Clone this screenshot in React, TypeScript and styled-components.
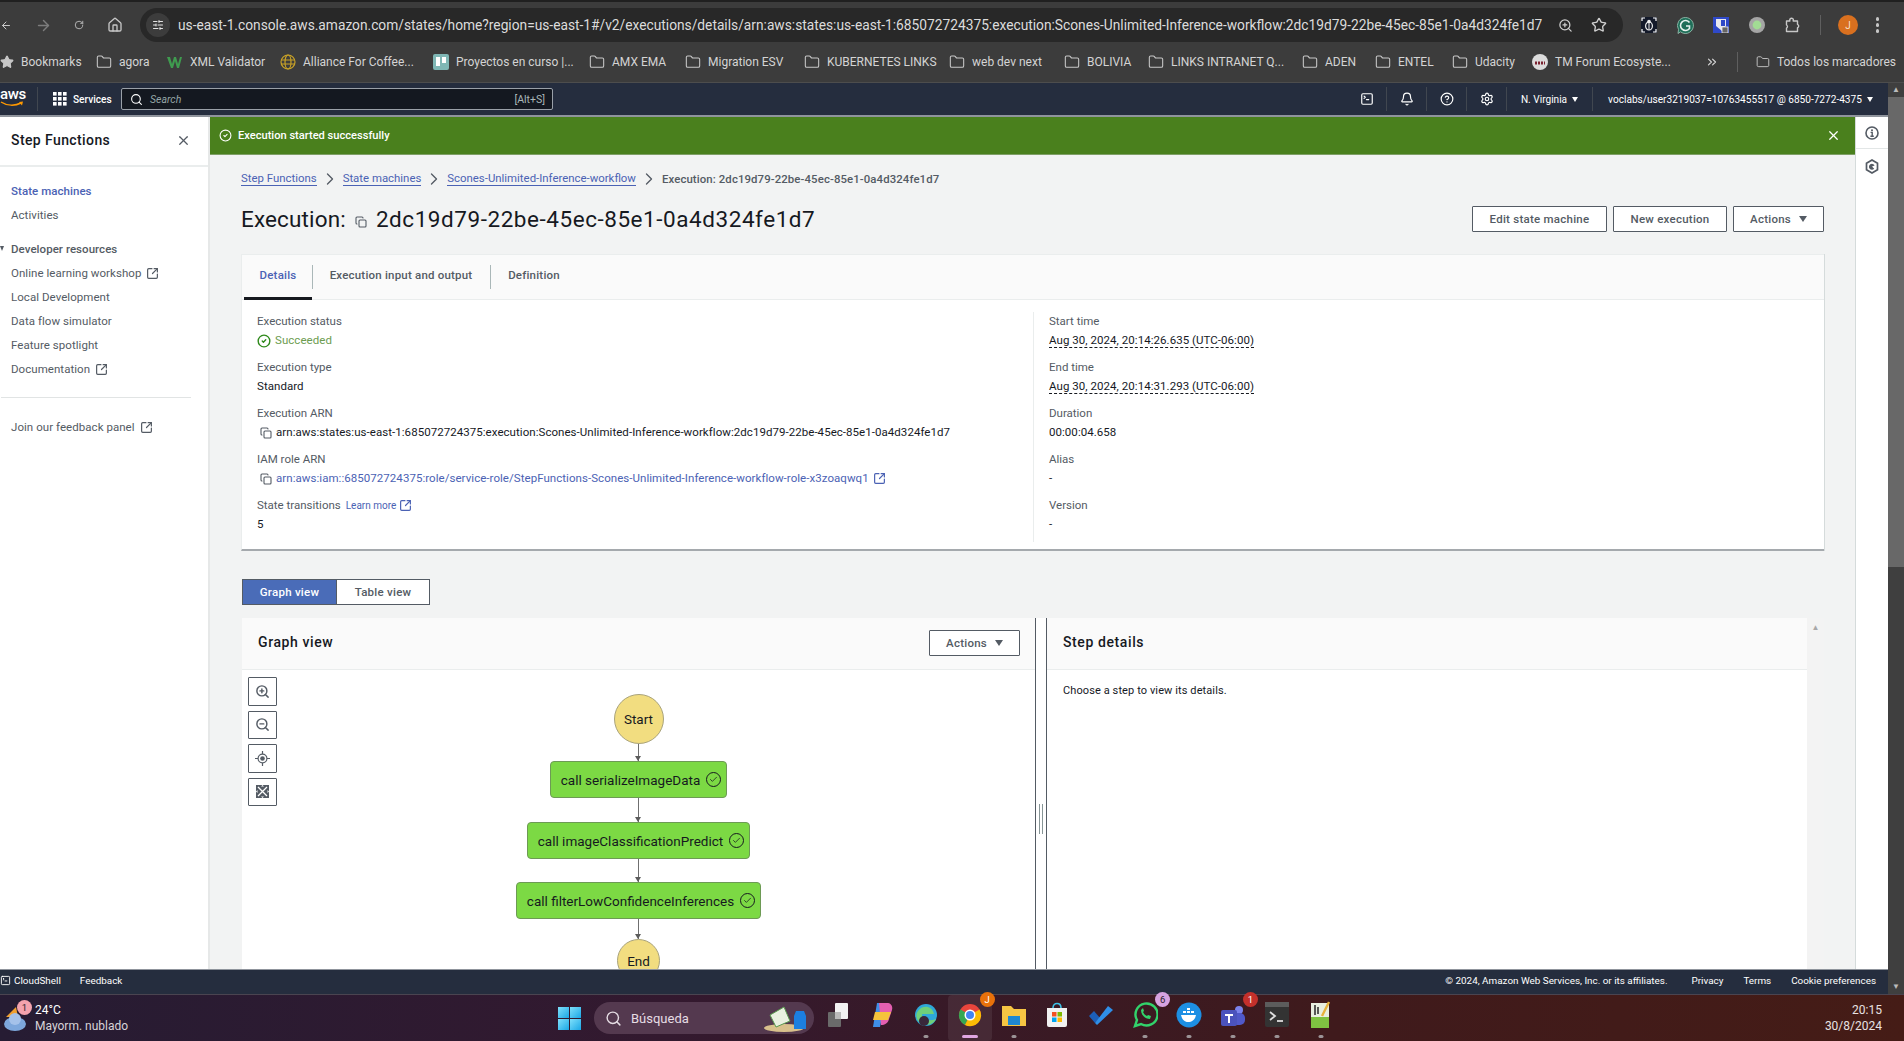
import React from "react";
import styled, { createGlobalStyle } from "styled-components";
import {
  ArrowLeft, ArrowRight, RotateCw, Home, SlidersHorizontal, ZoomIn, ZoomOut, Star,
  Folder, Search, X, CircleCheck, Copy, SquareArrowOutUpRight, ChevronRight, ChevronsRight, Bell, CircleHelp, Settings,
  SquareTerminal, Check,
} from "lucide-react";

const Global = createGlobalStyle`
  html, body { margin: 0; height: 100%; overflow: hidden; background: #3c3c3c; }
  body { font-family: Roboto, "Liberation Sans", sans-serif; font-size: 12px; color: #16191f; }
  * { box-sizing: border-box; }
`;

const Screen = styled.div`display: flex; flex-direction: column; width: 1904px; height: 1041px; overflow: hidden;`;

const TabEdge = styled.div`height: 2px; background: #202020; flex: none;`;
const Toolbar = styled.div`height: 42px; flex: none; background: #3c3c3c; display: flex; align-items: center; padding-top: 4px; color: #c7c7c7;`;
const NavBtn = styled.span<{ $w: number; $dim?: boolean }>`
  width: ${(p) => p.$w}px; display: flex; justify-content: center; flex: none;
  color: ${(p) => (p.$dim ? "#7d7d7d" : "#c7c7c7")};
`;
const Address = styled.div`
  width: 1483px; height: 34px; margin-left: -6px; background: #282828; border-radius: 17px; flex: none;
  display: flex; align-items: center; padding: 0 16px 0 6px; color: #e3e3e3;
`;
const SiteChip = styled.span`width: 24px; height: 24px; border-radius: 50%; background: #3c3c3c; display: flex; align-items: center; justify-content: center; flex: none; margin-right: 8px;`;
const Url = styled.span`font-size: 13.76px; flex: 1; white-space: nowrap; color: #dcdcdc; overflow: hidden;`;
const AddrIcons = styled.span`display: flex; gap: 18px; align-items: center; color: #d0d0d0;`;
const ExtRow = styled.div`display: flex; align-items: center; margin-left: 8px; flex: 1;`;
const ExtSlot = styled.span`width: 36px; display: flex; justify-content: center; flex: none;`;
const ToolSep = styled.span`width: 1px; height: 20px; background: #5f5f5f; margin: 0 17px 0 9px; flex: none;`;
const Avatar = styled.span`width: 20px; height: 20px; border-radius: 50%; background: #d9701f; color: #f6dfc6; font-size: 10px; display: flex; align-items: center; justify-content: center; flex: none; margin-right: 18px;`;
const MenuDots = styled.span`display: flex; flex-direction: column; gap: 2.5px; flex: none;`;
const MenuDot = styled.i`width: 3.4px; height: 3.4px; border-radius: 50%; background: #c7c7c7; display: block;`;

const Bookmarks = styled.div`height: 39px; flex: none; background: #3c3c3c; border-bottom: 1px solid #4d4d4d; display: flex; align-items: center; color: #d4d4d4; font-size: 12px; padding-bottom: 2px;`;
const Mark = styled.span<{ $w: number }>`width: ${(p) => p.$w}px; flex: none; display: flex; align-items: center; gap: 7px; white-space: nowrap;`;
const MoreMarks = styled.span`width: 34px; flex: none; display: flex; padding-left: 2px;`;
const MarkSep = styled.span`width: 1px; height: 20px; background: #5f5f5f; margin-right: 18px; flex: none;`;
const Favicon = styled.span<{ $bg: string }>`width: 16px; height: 16px; border-radius: 2px; background: ${(p) => p.$bg}; color: #fff; font-size: 9px; font-weight: 700; display: flex; align-items: center; justify-content: center; flex: none;`;

const PageRow = styled.div`flex: none; height: 911px; display: flex;`;
const Page = styled.div`width: 1888px; flex: none; display: flex; flex-direction: column;`;
const Scrollbar = styled.div`width: 16px; flex: none; background: #3f3f3f; display: flex; flex-direction: column; align-items: center; color: #bbb; font-size: 8px; line-height: 14px;`;
const Thumb = styled.div`width: 16px; height: 470px; background: #686868; margin: 0 0 auto;`;

const AwsNav = styled.div`height: 34px; flex: none; background: #252d3e; border-bottom: 2px solid #8f949c; display: flex; align-items: center; color: #fff; font-size: 10.1px; position: relative;`;
const AwsLogo = styled.span`width: 38px; height: 24px; border-right: 1px solid #414750; position: relative; flex: none; display: block; font-size: 15px; font-weight: 500; line-height: 15px; letter-spacing: -0.3px;`;
const Swoosh = styled.svg`position: absolute; left: 0; top: 14px;`;
const ServicesBtn = styled.span`display: flex; align-items: center; gap: 6px; margin-left: 15px; width: 68px; flex: none; font-weight: 500;`;
const SearchBox = styled.div`width: 432px; height: 22px; background: #141820; border: 1px solid #9aa0a8; border-radius: 2px; display: flex; align-items: center; gap: 7px; padding: 0 7px 0 8px; flex: none; color: #aab7b8; font-size: 10.5px;`;
const SearchHint = styled.i`flex: 1; color: #95a5a6;`;
const NavRight = styled.div`margin-left: auto; display: flex; align-items: center; height: 100%;`;
const NavIcon = styled.span`width: 40px; height: 24px; border-right: 1px solid #414750; display: flex; align-items: center; justify-content: center; flex: none;`;
const NavMenu = styled.span<{ $w: number; $last?: boolean }>`
  width: ${(p) => p.$w}px; height: 24px; flex: none; display: flex; align-items: center; justify-content: center; gap: 5px; white-space: nowrap;
  border-right: ${(p) => (p.$last ? "none" : "1px solid #414750")};
`;
const Caret = styled.span`display: inline-block; width: 0; height: 0; border-left: 3.5px solid transparent; border-right: 3.5px solid transparent; border-top: 5px solid currentColor; flex: none;`;
const BtnCaret = styled.span`display: inline-block; width: 0; height: 0; border-left: 4.5px solid transparent; border-right: 4.5px solid transparent; border-top: 6px solid currentColor; flex: none;`;

const Body = styled.div`flex: 1; min-height: 0; display: flex; background: #fff; overflow: hidden;`;
const Sidebar = styled.aside`width: 210px; flex: none; background: #fff; border-right: 2px solid #e6e8e8; color: #545b64; font-size: 11.5px;`;
const SideHead = styled.div`height: 50px; border-bottom: 2px solid #eaeded; display: flex; align-items: center; justify-content: space-between; padding: 0 17px 2px 11px; color: #16191f;`;
const SideTitle = styled.span`font-size: 14px; font-weight: 500; letter-spacing: 0.4px;`;
const SideItem = styled.div<{ $active?: boolean }>`
  height: 24px; display: flex; align-items: center; gap: 5px; padding-left: 11px; letter-spacing: 0.05px;
  color: ${(p) => (p.$active ? "#4b62b4" : "#545b64")}; font-weight: ${(p) => (p.$active ? 500 : 400)};
`;
const SideList = styled.div`padding-top: 12px;`;
const SideSection = styled.div`height: 24px; margin-top: 10px; display: flex; align-items: center; padding-left: 11px; font-weight: 500; position: relative; letter-spacing: 0.05px;`;
const SectionCaret = styled.span`position: absolute; left: 0; top: 9px; border-left: 2.5px solid transparent; border-right: 2.5px solid transparent; border-top: 5px solid #545b64;`;
const SideRule = styled.div`height: 1px; background: #e1e4e4; margin: 16px 17px 17px 1px;`;

const Main = styled.main`flex: 1; min-width: 0; background: #f2f3f3; overflow: hidden;`;
const Banner = styled.div`height: 38px; background: #4a801d; border-bottom: 1px solid #7f9f66; color: #fff; display: flex; align-items: center; gap: 6px; padding: 0 14px 0 9px; font-size: 11.1px; font-weight: 500;`;
const BannerText = styled.span`flex: 1;`;
const Content = styled.div`padding: 15px 31px 0;`;
const Crumbs = styled.nav`height: 18px; display: flex; align-items: center; gap: 3px; color: #545b64; font-size: 11.4px;`;
const CrumbLink = styled.a`color: #4b62b4; border-bottom: 1px solid #4b62b4; line-height: 13px;`;
const CrumbCurrent = styled.span`font-weight: 500; color: #545b64; letter-spacing: 0.1px;`;
const TitleRow = styled.div`display: flex; align-items: center; height: 28px; margin-top: 17px;`;
const Title = styled.h1`font-size: 22.5px; font-weight: 400; margin: 0; color: #16191f; display: flex; align-items: center; flex: 1; white-space: pre; letter-spacing: 0.15px;`;
const TitleId = styled.span`letter-spacing: 0.55px;`;
const TitleCopy = styled.span`display: flex; margin: 6px 9px 0 9px; color: #545b64;`;
const Button = styled.button<{ $w: number; $ml?: number }>`
  width: ${(p) => p.$w}px; height: 26px; margin-left: ${(p) => p.$ml ?? 0}px; flex: none; background: #fff; border: 1px solid #545b64; border-radius: 1px;
  color: #545b64; font: 500 11.5px Roboto, sans-serif; letter-spacing: 0.25px; display: flex; align-items: center; justify-content: center; gap: 8px; padding: 0;
`;
const Card = styled.section`margin-top: 21px; height: 297px; background: #fff; border-top: 1px solid #eaeded; border-left: 1px solid #eaeded; border-bottom: 2px solid #a5a9ad; box-shadow: 1px 0 0 #d5dbdb;`;
const TabRow = styled.div`height: 45px; background: #fafafa; border-bottom: 1px solid #eaeded; display: flex; padding-left: 2px;`;
const Tab = styled.div<{ $w: number; $active?: boolean; $sep?: boolean }>`
  width: ${(p) => p.$w}px; height: 45px; flex: none; display: flex; align-items: center; justify-content: center; position: relative;
  font-weight: 500; font-size: 11.5px; letter-spacing: 0.2px; padding-bottom: 3px; color: ${(p) => (p.$active ? "#4b62b4" : "#545b64")};
  border-bottom: 3px solid ${(p) => (p.$active ? "#16191f" : "transparent")};
  &::after { content: ""; position: absolute; right: -1px; top: 10px; height: 24px; width: 1px; background: ${(p) => (p.$sep ? "#aab7b8" : "transparent")}; }
`;
const Columns = styled.div`display: grid; grid-template-columns: 791px 1fr; padding-top: 12px;`;
const ColLeft = styled.div`padding-left: 15px;`;
const ColRight = styled.div`border-left: 1px solid #eaeded; padding-left: 15px;`;
const Field = styled.div`height: 46px;`;
const Label = styled.div`height: 19px; line-height: 19px; color: #545b64; font-size: 11.5px; display: flex; align-items: center; gap: 5px;`;
const Value = styled.div`height: 19px; line-height: 19px; font-size: 11.5px; display: flex; align-items: center; gap: 4px; color: #16191f; white-space: nowrap; letter-spacing: 0.05px;`;
const Success = styled.span`color: #6c9c50; display: flex; align-items: center; gap: 4px;`;
const SuccessIcon = styled.span`color: #2f8a1c; display: flex;`;
const Link = styled.a`color: #4b62b4; display: inline-flex; align-items: center; gap: 4px;`;
const Small = styled.a`color: #4b62b4; font-size: 10px; display: inline-flex; align-items: center; gap: 3px;`;
const CopyWrap = styled.span`display: flex; color: #545b64; margin-left: 3px;`;
const Dashed = styled.span`border-bottom: 1px dashed #16191f; line-height: 14px;`;

const ViewSwitch = styled.div`display: flex; margin: 28px 0 0 1px; height: 26px;`;
const ViewBtn = styled.div<{ $on?: boolean }>`
  width: ${(p) => (p.$on ? 95 : 93)}px; display: flex; align-items: center; justify-content: center; font-weight: 500; font-size: 11.5px; letter-spacing: 0.25px;
  border: 1px solid #545b64; border-left-width: ${(p) => (p.$on ? 1 : 0)}px;
  background: ${(p) => (p.$on ? "#4a6cb8" : "#fff")}; color: ${(p) => (p.$on ? "#fff" : "#545b64")};
`;
const GraphCard = styled.section`margin: 13px 0 0 1px; display: flex; height: 500px; background: #fff;`;
const GraphPane = styled.div`width: 794px; flex: none; position: relative; border-right: 1px solid #545b64;`;
const PaneHead = styled.div`height: 52px; background: #fafafa; border-bottom: 1px solid #eaeded; display: flex; align-items: center; justify-content: space-between; padding: 0 15px 2px 16px;`;
const PaneTitle = styled.h2`margin: 0 0 2px; font-size: 14px; font-weight: 500; letter-spacing: 0.6px; color: #16191f;`;
const Splitter = styled.div`width: 11px; flex: none; background: #fff; border-right: 1px solid #545b64; display: flex; align-items: flex-start; justify-content: center; padding-top: 186px; gap: 2px;`;
const Grip = styled.span`width: 1px; height: 30px; background: #879596;`;
const StepPane = styled.div`flex: 1; min-width: 0; display: flex;`;
const StepInner = styled.div`flex: 1; min-width: 0;`;
const StepText = styled.div`padding: 13px 0 0 16px; font-size: 11px; line-height: 15px; color: #16191f; letter-spacing: 0.1px;`;
const StepTrack = styled.div`width: 17px; flex: none; background: #f3f3f3; color: #a8a8a8; font-size: 8px; text-align: center; padding-top: 5px;`;
const Tools = styled.div`position: absolute; left: 6px; top: 59px; display: flex; flex-direction: column; gap: 5px;`;
const ToolBtn = styled.span`width: 29px; height: 28.5px; background: #fff; border: 1px solid #545b64; border-radius: 1px; color: #545b64; display: flex; align-items: center; justify-content: center;`;
const Canvas = styled.div`padding-top: 24px; display: flex; flex-direction: column; align-items: center;`;
const Circle = styled.div<{ $d: number }>`width: ${(p) => p.$d}px; height: ${(p) => p.$d}px; flex: none; border-radius: 50%; background: #f2dd80; border: 1px solid #a9a37c; display: flex; align-items: center; justify-content: center; font-size: 13.5px; color: #16191f;`;
const StepNode = styled.div`height: 37px; flex: none; background: #7cd944; border: 1px solid #6d9a55; border-radius: 4px; display: flex; align-items: center; gap: 6px; padding: 0 5px 0 10px; font-size: 13.5px; white-space: nowrap; color: #16191f;`;
const NodeCheck = styled.span`width: 15px; height: 15px; border-radius: 50%; border: 1px solid #16191f; display: flex; align-items: center; justify-content: center; flex: none;`;
const Edge = styled.div<{ $h: number }>`width: 1px; height: ${(p) => p.$h}px; flex: none; background: #6f6f6f; position: relative;
  &::after { content: ""; position: absolute; left: -3px; bottom: 0; border-left: 3.5px solid transparent; border-right: 3.5px solid transparent; border-top: 5px solid #5c5c5c; }
`;

const Rail = styled.aside`width: 33px; flex: none; background: #fff; border-left: 1px solid #d5dbdb; color: #545b64;`;
const RailSlot = styled.div`height: 32px; display: flex; align-items: center; justify-content: center; border-bottom: 1px solid #e2e6e6;`;
const RailIconSlot = styled.div`height: 34px; display: flex; align-items: center; justify-content: center;`;

const Footer = styled.footer`height: 25px; flex: none; background: #252d3e; border-top: 1px solid #8f949c; display: flex; align-items: center; color: #fff; font-size: 9.9px; padding: 0 12px 3px 0;`;
const FootLeft = styled.span<{ $ml: number }>`margin-left: ${(p) => p.$ml}px; display: flex; align-items: center; gap: 3px;`;
const FootRight = styled.div`margin-left: auto; display: flex; gap: 20px;`;
const FootLegal = styled.span`margin-right: 4px;`;

const Taskbar = styled.div`height: 47px; flex: none; background: linear-gradient(90deg, #261c33 0%, #33192f 35%, #3f1a1c 70%, #451c16 100%); border-top: 1px solid #4a4450; display: flex; align-items: center; color: #fff; position: relative; font-size: 12px;`;
const Weather = styled.div`width: 558px; flex: none; padding-left: 2px; display: flex; align-items: center; gap: 6px;`;
const WeatherIcon = styled.span`position: relative; width: 27px; height: 30px; display: block; flex: none;`;
const WeatherText = styled.div`line-height: 16px; font-size: 12px;`;
const Muted = styled.div`color: #d8d3d8;`;
const Badge = styled.span<{ $bg: string; $dark?: boolean }>`
  position: absolute; right: -3px; top: -3px; width: 15px; height: 15px; border-radius: 50%; background: ${(p) => p.$bg};
  color: ${(p) => (p.$dark ? "#2a1d2a" : "#fff")}; font-size: 9.5px; display: flex; align-items: center; justify-content: center;
`;
const WinLogo = styled.span`width: 23px; height: 23px; flex: none; display: grid; grid-template-columns: 1fr 1fr; gap: 1px;`;
const WinPane = styled.i`background: linear-gradient(135deg, #7fe0fb, #1aa7e6); display: block;`;
const SearchPill = styled.div`width: 220px; height: 32px; margin-left: 13px; flex: none; background: #54394f; border-radius: 16px; display: flex; align-items: center; gap: 9px; padding: 0 6px 0 11px; color: #e6dde4; font-size: 13px; position: relative;`;
const PillText = styled.span`flex: 1;`;
const Apps = styled.div`display: flex; margin-left: 2px;`;
const AppSlot = styled.span<{ $on?: boolean }>`
  width: 43.9px; height: 46px; flex: none; display: flex; align-items: center; justify-content: center; position: relative;
  background: ${(p) => (p.$on ? "rgba(255,255,255,.07)" : "transparent")}; border-radius: 4px; padding-bottom: 7px;
`;
const Dot = styled.span<{ $on?: boolean }>`position: absolute; bottom: 3px; left: 50%; transform: translateX(-50%); height: 3px; border-radius: 2px; width: ${(p) => (p.$on ? 16 : 5)}px; background: ${(p) => (p.$on ? "#e0a6e0" : "#9b9396")};`;
const Clock = styled.div`margin-left: auto; padding-right: 22px; text-align: right; line-height: 16px; font-size: 12px; color: #e8e2e2;`;

const marks: { name: string; w: number; kind?: string }[] = [
  { name: "Bookmarks", w: 96, kind: "star" },
  { name: "agora", w: 71 },
  { name: "XML Validator", w: 113, kind: "xml" },
  { name: "Alliance For Coffee...", w: 153, kind: "coffee" },
  { name: "Proyectos en curso |...", w: 156, kind: "trello" },
  { name: "AMX EMA", w: 96 },
  { name: "Migration ESV", w: 119 },
  { name: "KUBERNETES LINKS", w: 145 },
  { name: "web dev next", w: 115 },
  { name: "BOLIVIA", w: 84 },
  { name: "LINKS INTRANET Q...", w: 154 },
  { name: "ADEN", w: 73 },
  { name: "ENTEL", w: 77 },
  { name: "Udacity", w: 80 },
  { name: "TM Forum Ecosyste...", w: 171, kind: "tm" },
];

function MarkIcon({ kind }: { kind?: string }) {
  if (kind === "star") return <Star size={14} fill="#c7c7c7" stroke="#c7c7c7" />;
  if (kind === "xml") return <Favicon $bg="transparent"><svg width="16" height="14" viewBox="0 0 16 14"><path d="M0 2l3 0 2 7 2-7 2 0 2 7 2-7 2 0-3 11-2 0-2-7-2 7-2 0z" fill="#3f9b4f" /></svg></Favicon>;
  if (kind === "coffee") return <svg width="16" height="16" viewBox="0 0 16 16" fill="none" stroke="#c9a227" strokeWidth="1.2"><circle cx="8" cy="8" r="7" /><ellipse cx="8" cy="8" rx="3" ry="7" /><path d="M1 6h14M1 10h14" /></svg>;
  if (kind === "trello") return <Favicon $bg="#7fb7b5"><svg width="12" height="12" viewBox="0 0 12 12" fill="#fff"><rect x="1" y="1" width="4" height="9" /><rect x="7" y="1" width="4" height="6" /></svg></Favicon>;
  if (kind === "tm") return <svg width="16" height="16" viewBox="0 0 16 16"><circle cx="8" cy="8" r="8" fill="#dcdcdc" /><path d="M3 9h10" stroke="#7b2230" strokeWidth="3" strokeDasharray="2 1" /></svg>;
  return <Folder size={16} strokeWidth={1.6} color="#c7c7c7" />;
}

const Cloudy = () => (
  <svg width="27" height="30" viewBox="0 0 27 30">
    <path d="M4 14 L14 4 L16 14z" fill="#f0a030" />
    <ellipse cx="13" cy="21" rx="11" ry="7" fill="#7da7dc" />
    <circle cx="13" cy="16" r="6" fill="#a5c2ea" />
  </svg>
);
const Edgeb = () => <svg width="24" height="26" viewBox="0 0 24 26"><circle cx="12" cy="13" r="11" fill="#2fa8d8" /><path d="M4 9c4-6 14-6 16 3H8c0 5 6 8 14 5-3 6-10 7-14 5-6-3-7-9-4-13z" fill="#6fd07a" /><circle cx="10" cy="19" r="5" fill="#39283a" /></svg>;
const Chrome = () => <svg width="24" height="24" viewBox="0 0 24 24"><circle cx="12" cy="12" r="11" fill="#e8453c" /><path d="M12 12L2.5 6.5A11 11 0 0 0 7 22z" fill="#35a853" /><path d="M12 12l9.5-5.5A11 11 0 0 1 7 22z" fill="#fbbc05" /><circle cx="12" cy="12" r="5.5" fill="#fff" /><circle cx="12" cy="12" r="4" fill="#4285f4" /></svg>;
const Files = () => <svg width="26" height="24" viewBox="0 0 26 24"><path d="M1 3h9l3 3h12v17H1z" fill="#f6c543" /><rect x="7" y="13" width="12" height="9" fill="#1e88d2" /></svg>;
const Store = () => <svg width="24" height="26" viewBox="0 0 24 26"><path d="M2 6h20v17a2 2 0 0 1-2 2H4a2 2 0 0 1-2-2z" fill="#f1f1f1" /><path d="M8 6c0-6 8-6 8 0" fill="none" stroke="#3fc3e8" strokeWidth="1.6" /><rect x="7" y="10" width="4.5" height="4.5" fill="#f25022" /><rect x="12.5" y="10" width="4.5" height="4.5" fill="#7fba00" /><rect x="7" y="15.5" width="4.5" height="4.5" fill="#00a4ef" /><rect x="12.5" y="15.5" width="4.5" height="4.5" fill="#ffb900" /></svg>;
const Todo = () => <svg width="26" height="24" viewBox="0 0 26 24"><path d="M1 13l5-5 6 7-5 5z" fill="#1c5fb8" /><path d="M7 20L20 3l5 4-16 15z" fill="#2f8fe8" /></svg>;
const Whats = () => <svg width="26" height="26" viewBox="0 0 26 26" fill="none"><path d="M3 24l2-6a11 11 0 1 1 4 4z" stroke="#32d36b" strokeWidth="2.4" /><path d="M9 8c0 5 4 9 9 9l1-3-3-1-1 1c-2-1-3-2-4-4l1-1-1-3z" fill="#32d36b" /></svg>;
const Docker = () => <svg width="26" height="26" viewBox="0 0 26 26"><circle cx="13" cy="13" r="12.5" fill="#1d8fe3" /><path d="M5 13h15c-1 5-4 7-8 7s-6-3-7-7z" fill="#fff" /><path d="M7 11h3V9H7zm4 0h3V9h-3zm0-3h3V6h-3zm4 3h3V9h-3z" fill="#fff" /></svg>;
const Teams = () => <svg width="26" height="26" viewBox="0 0 26 26"><circle cx="19" cy="8" r="4" fill="#7b83eb" /><rect x="12" y="11" width="13" height="12" rx="5" fill="#5059c9" /><rect x="1" y="8" width="16" height="16" rx="2" fill="#4b53bc" /><path d="M5 12h8v2h-3v7H8v-7H5z" fill="#fff" /></svg>;
const Term = () => <svg width="24" height="25" viewBox="0 0 24 25"><rect width="24" height="25" rx="2" fill="#333" /><rect width="24" height="5" fill="#5c5c5c" /><path d="M5 10l5 4-5 4" fill="none" stroke="#ddd" strokeWidth="1.8" /><path d="M12 19h6" stroke="#ddd" strokeWidth="1.8" /></svg>;
const Notes = () => <svg width="22" height="28" viewBox="0 0 22 28"><rect x="1" y="2" width="18" height="25" fill="#e8efe0" /><rect x="1" y="16" width="18" height="11" fill="#7fc241" /><path d="M5 4v10M8 6v7" stroke="#333" strokeWidth="1.6" /><path d="M19 1l-7 14" stroke="#e6b23c" strokeWidth="2.4" /></svg>;

const SwooshArt = () => (
  <Swoosh width="24" height="8" viewBox="0 0 24 8" fill="none">
    <path d="M1 1c6 4 14 4 20 1" stroke="#ff9900" strokeWidth="1.5" />
    <path d="M19 1l4-.5-1 4z" fill="#ff9900" />
  </Swoosh>
);

const GridIcon = () => (
  <svg width="14" height="14" viewBox="0 0 14 14" fill="#fff">
    {[0, 5, 10].map((y) => [0, 5, 10].map((x) => <rect key={`${x}${y}`} x={x} y={y} width="3.6" height="3.6" />))}
  </svg>
);

const ExtBug = () => (
  <svg width="16" height="16" viewBox="0 0 16 16" fill="none">
    <rect width="16" height="16" fill="#141a2a" />
    <path d="M1 4V1h3M12 1h3v3M1 12v3h3M15 12v3h-3" stroke="#fff" strokeWidth="1.2" />
    <ellipse cx="8" cy="9" rx="3.4" ry="4" stroke="#eee" strokeWidth="1.2" />
    <path d="M8 5v8" stroke="#eee" />
    <circle cx="8" cy="4.5" r="1.8" fill="#eee" />
  </svg>
);
const ExtGrammarly = () => (
  <svg width="17" height="17" viewBox="0 0 17 17" fill="none">
    <path d="M8.5.5a8 8 0 1 1-5 14.3L1 16.5l.5-4A8 8 0 0 1 8.5.5z" fill="#1f6e58" stroke="#9fc7b8" strokeWidth=".8" />
    <path d="M12.5 5.5a5 5 0 1 0 0 6V9H9" stroke="#e8f2ee" strokeWidth="1.6" />
  </svg>
);
const ExtShield = () => (
  <svg width="16" height="16" viewBox="0 0 16 16">
    <rect width="16" height="16" fill="#2f49c8" />
    <path d="M3 2h10v7l-4 5-6-5z" fill="#e8e8ee" />
    <path d="M8 3h4v6H8z" fill="#2f49c8" />
    <rect x="9" y="10" width="6" height="6" fill="#666" stroke="#eee" strokeWidth=".8" />
  </svg>
);
const ExtDot = () => <svg width="16" height="16" viewBox="0 0 16 16"><circle cx="8" cy="8" r="8" fill="#a5a5a5" /><circle cx="8" cy="8" r="4.4" fill="#a2dc94" /></svg>;
const ExtPuzzle = () => (
  <svg width="16" height="16" viewBox="0 0 16 16" fill="none" stroke="#c7c7c7" strokeWidth="1.4" strokeLinejoin="round">
    <path d="M1.5 4h3.4a1.8 1.8 0 0 1 3.4-1.6L8.2 4h4.3v3.3a1.8 1.8 0 0 1 0 3.4v3.8H1.5v-3.3a1.8 1.8 0 0 0 0-3.2z" />
  </svg>
);

const RailInfo = () => (
  <svg width="14" height="14" viewBox="0 0 14 14" fill="none" stroke="#545b64">
    <circle cx="7" cy="7" r="6" strokeWidth="1.6" />
    <circle cx="7" cy="4.2" r="1" fill="#545b64" stroke="none" />
    <path d="M5.6 6.4H7.2V10M5.4 10.2h3.4" strokeWidth="1.4" />
  </svg>
);
const RailHex = () => (
  <svg width="14" height="15" viewBox="0 0 14 15" fill="none" stroke="#545b64" strokeWidth="1.7">
    <path d="M7 1l5.5 3.2v6.6L7 14l-5.5-3.2V4.2z" />
    <path d="M9.6 6.4A3 3 0 1 0 9.2 9.8L7 7.6z" fill="#545b64" stroke="none" />
  </svg>
);
const ToolTarget = () => (
  <svg width="15" height="15" viewBox="0 0 15 15" fill="none" stroke="#545b64">
    <circle cx="7.5" cy="7.5" r="4.4" strokeWidth="1.2" />
    <circle cx="7.5" cy="7.5" r="2.3" fill="#545b64" stroke="none" />
    <path d="M7.5 0v3M7.5 12v3M0 7.5h3M12 7.5h3" strokeWidth="1.2" />
  </svg>
);
const ToolFit = () => (
  <svg width="13" height="13" viewBox="0 0 13 13">
    <rect width="13" height="13" fill="#545b64" />
    <path d="M2 2l9 9M11 2l-9 9" stroke="#fff" strokeWidth="1.3" />
    <path d="M6.5 0L5 1.5h3zM6.5 13L5 11.5h3zM0 6.5L1.5 5v3zM13 6.5L11.5 5v3z" fill="#fff" />
  </svg>
);

const OutLink = () => <SquareArrowOutUpRight size={13} strokeWidth={2.2} />;

const apps: { el: React.ReactNode; on?: boolean; dot?: boolean; badge?: React.ReactNode }[] = [
  { el: <Edgeb />, dot: true },
  { el: <Chrome />, on: true, dot: true, badge: <Badge $bg="#e8710a">J</Badge> },
  { el: <Files />, dot: true },
  { el: <Store /> },
  { el: <Todo /> },
  { el: <Whats />, dot: true, badge: <Badge $bg="#d6a3e0" $dark>6</Badge> },
  { el: <Docker />, dot: true },
  { el: <Teams />, dot: true, badge: <Badge $bg="#c4302b">1</Badge> },
  { el: <Term />, dot: true },
  { el: <Notes />, dot: true },
];

export default function App() {
  return (
    <Screen>
      <Global />
      <TabEdge />
      <Toolbar>
        <NavBtn $w={12}><ArrowLeft size={17} /></NavBtn>
        <NavBtn $w={62} $dim><ArrowRight size={17} /></NavBtn>
        <NavBtn $w={10}><RotateCw size={16} /></NavBtn>
        <NavBtn $w={62}><Home size={16} /></NavBtn>
        <Address>
          <SiteChip><SlidersHorizontal size={12} /></SiteChip>
          <Url>us-east-1.console.aws.amazon.com/states/home?region=us-east-1#/v2/executions/details/arn:aws:states:us-east-1:685072724375:execution:Scones-Unlimited-Inference-workflow:2dc19d79-22be-45ec-85e1-0a4d324fe1d7</Url>
          <AddrIcons><ZoomIn size={15} /><Star size={16} /></AddrIcons>
        </Address>
        <ExtRow>
          <ExtSlot><ExtBug /></ExtSlot>
          <ExtSlot><ExtGrammarly /></ExtSlot>
          <ExtSlot><ExtShield /></ExtSlot>
          <ExtSlot><ExtDot /></ExtSlot>
          <ExtSlot><ExtPuzzle /></ExtSlot>
          <ToolSep />
          <Avatar>J</Avatar>
          <MenuDots><MenuDot /><MenuDot /><MenuDot /></MenuDots>
        </ExtRow>
      </Toolbar>
      <Bookmarks>
        {marks.map((m) => (
          <Mark key={m.name} $w={m.w}><MarkIcon kind={m.kind} />{m.name}</Mark>
        ))}
        <MoreMarks><ChevronsRight size={14} /></MoreMarks>
        <MarkSep />
        <Mark $w={140}><Folder size={16} strokeWidth={1.6} color="#c7c7c7" />Todos los marcadores</Mark>
      </Bookmarks>
      <PageRow>
        <Page>
          <AwsNav>
            <AwsLogo>aws<SwooshArt /></AwsLogo>
            <ServicesBtn><GridIcon />Services</ServicesBtn>
            <SearchBox><Search size={13} color="#fff" /><SearchHint>Search</SearchHint>[Alt+S]</SearchBox>
            <NavRight>
              <NavIcon><SquareTerminal size={14} /></NavIcon>
              <NavIcon><Bell size={14} /></NavIcon>
              <NavIcon><CircleHelp size={14} /></NavIcon>
              <NavIcon><Settings size={14} /></NavIcon>
              <NavMenu $w={86}>N. Virginia<Caret /></NavMenu>
              <NavMenu $w={295} $last>voclabs/user3219037=10763455517 @ 6850-7272-4375<Caret /></NavMenu>
            </NavRight>
          </AwsNav>
          <Body>
            <Sidebar>
              <SideHead><SideTitle>Step Functions</SideTitle><X size={15} color="#545b64" /></SideHead>
              <SideList>
                <SideItem $active>State machines</SideItem>
                <SideItem>Activities</SideItem>
                <SideSection><SectionCaret />Developer resources</SideSection>
                <SideItem>Online learning workshop<OutLink /></SideItem>
                <SideItem>Local Development</SideItem>
                <SideItem>Data flow simulator</SideItem>
                <SideItem>Feature spotlight</SideItem>
                <SideItem>Documentation<OutLink /></SideItem>
                <SideRule />
                <SideItem>Join our feedback panel<OutLink /></SideItem>
              </SideList>
            </Sidebar>
            <Main>
              <Banner><CircleCheck size={13} /><BannerText>Execution started successfully</BannerText><X size={15} /></Banner>
              <Content>
                <Crumbs>
                  <CrumbLink>Step Functions</CrumbLink><ChevronRight size={20} strokeWidth={1.6} />
                  <CrumbLink>State machines</CrumbLink><ChevronRight size={20} strokeWidth={1.6} />
                  <CrumbLink>Scones-Unlimited-Inference-workflow</CrumbLink><ChevronRight size={20} strokeWidth={1.6} />
                  <CrumbCurrent>Execution: 2dc19d79-22be-45ec-85e1-0a4d324fe1d7</CrumbCurrent>
                </Crumbs>
                <TitleRow>
                  <Title>Execution:<TitleCopy><Copy size={12} strokeWidth={2.2} /></TitleCopy><TitleId>2dc19d79-22be-45ec-85e1-0a4d324fe1d7</TitleId></Title>
                  <Button $w={135}>Edit state machine</Button>
                  <Button $w={114} $ml={6}>New execution</Button>
                  <Button $w={91} $ml={6}>Actions<BtnCaret /></Button>
                </TitleRow>
                <Card>
                  <TabRow>
                    <Tab $w={68} $active $sep>Details</Tab>
                    <Tab $w={178} $sep>Execution input and output</Tab>
                    <Tab $w={88}>Definition</Tab>
                  </TabRow>
                  <Columns>
                    <ColLeft>
                      <Field><Label>Execution status</Label><Value><Success><SuccessIcon><CircleCheck size={14} strokeWidth={2.4} /></SuccessIcon>Succeeded</Success></Value></Field>
                      <Field><Label>Execution type</Label><Value>Standard</Value></Field>
                      <Field><Label>Execution ARN</Label><Value><CopyWrap><Copy size={12} strokeWidth={2.2} /></CopyWrap>arn:aws:states:us-east-1:685072724375:execution:Scones-Unlimited-Inference-workflow:2dc19d79-22be-45ec-85e1-0a4d324fe1d7</Value></Field>
                      <Field><Label>IAM role ARN</Label><Value><CopyWrap><Copy size={12} strokeWidth={2.2} /></CopyWrap><Link>arn:aws:iam::685072724375:role/service-role/StepFunctions-Scones-Unlimited-Inference-workflow-role-x3zoaqwq1<OutLink /></Link></Value></Field>
                      <Field><Label>State transitions<Small>Learn more<OutLink /></Small></Label><Value>5</Value></Field>
                    </ColLeft>
                    <ColRight>
                      <Field><Label>Start time</Label><Value><Dashed>Aug 30, 2024, 20:14:26.635 (UTC-06:00)</Dashed></Value></Field>
                      <Field><Label>End time</Label><Value><Dashed>Aug 30, 2024, 20:14:31.293 (UTC-06:00)</Dashed></Value></Field>
                      <Field><Label>Duration</Label><Value>00:00:04.658</Value></Field>
                      <Field><Label>Alias</Label><Value>-</Value></Field>
                      <Field><Label>Version</Label><Value>-</Value></Field>
                    </ColRight>
                  </Columns>
                </Card>
                <ViewSwitch><ViewBtn $on>Graph view</ViewBtn><ViewBtn>Table view</ViewBtn></ViewSwitch>
                <GraphCard>
                  <GraphPane>
                    <PaneHead><PaneTitle>Graph view</PaneTitle><Button $w={91}>Actions<BtnCaret /></Button></PaneHead>
                    <Tools>
                      <ToolBtn><ZoomIn size={15} strokeWidth={2.3} /></ToolBtn>
                      <ToolBtn><ZoomOut size={15} strokeWidth={2.3} /></ToolBtn>
                      <ToolBtn><ToolTarget /></ToolBtn>
                      <ToolBtn><ToolFit /></ToolBtn>
                    </Tools>
                    <Canvas>
                      <Circle $d={50}>Start</Circle>
                      <Edge $h={17} />
                      <StepNode>call serializeImageData<NodeCheck><Check size={9} /></NodeCheck></StepNode>
                      <Edge $h={24} />
                      <StepNode>call imageClassificationPredict<NodeCheck><Check size={9} /></NodeCheck></StepNode>
                      <Edge $h={23} />
                      <StepNode>call filterLowConfidenceInferences<NodeCheck><Check size={9} /></NodeCheck></StepNode>
                      <Edge $h={20} />
                      <Circle $d={43}>End</Circle>
                    </Canvas>
                  </GraphPane>
                  <Splitter><Grip /><Grip /></Splitter>
                  <StepPane>
                    <StepInner>
                      <PaneHead><PaneTitle>Step details</PaneTitle></PaneHead>
                      <StepText>Choose a step to view its details.</StepText>
                    </StepInner>
                    <StepTrack>▲</StepTrack>
                  </StepPane>
                </GraphCard>
              </Content>
            </Main>
            <Rail>
              <RailSlot><RailInfo /></RailSlot>
              <RailIconSlot><RailHex /></RailIconSlot>
            </Rail>
          </Body>
          <Footer>
            <FootLeft $ml={0}><SquareTerminal size={11} />CloudShell</FootLeft>
            <FootLeft $ml={19}>Feedback</FootLeft>
            <FootRight>
              <FootLegal>© 2024, Amazon Web Services, Inc. or its affiliates.</FootLegal>
              <span>Privacy</span><span>Terms</span><span>Cookie preferences</span>
            </FootRight>
          </Footer>
        </Page>
        <Scrollbar>
          ▲
          <Thumb />
          ▼
        </Scrollbar>
      </PageRow>
      <Taskbar>
        <Weather>
          <WeatherIcon><Cloudy /><Badge $bg="#f4a3ad" $dark>1</Badge></WeatherIcon>
          <WeatherText><div>24°C</div><Muted>Mayorm. nublado</Muted></WeatherText>
        </Weather>
        <WinLogo><WinPane /><WinPane /><WinPane /><WinPane /></WinLogo>
        <SearchPill>
          <Search size={17} />
          <PillText>Búsqueda</PillText>
          <svg width="44" height="30" viewBox="0 0 44 30"><ellipse cx="20" cy="25" rx="20" ry="4" fill="#d8c08c" /><path d="M6 12l14-8 6 14-14 6z" fill="#e9f0e0" stroke="#5a9a50" /><path d="M32 8h8l2 5v13h-12V13z" fill="#1c7fe0" /></svg>
        </SearchPill>
        <Apps>
          <AppSlot><svg width="22" height="26" viewBox="0 0 22 26"><rect x="8" y="1" width="13" height="16" rx="1" fill="#f2f2f2" /><rect x="1" y="10" width="13" height="15" rx="1" fill="#6a6a6a" /><rect x="8" y="10" width="6" height="7" fill="#bbb" /></svg></AppSlot>
          <AppSlot><svg width="26" height="26" viewBox="0 0 26 26"><path d="M8 1h8l-5 24H4z" fill="#3f8fe8" /><path d="M10 1h8c4 0 6 3 5 7l-3 9c-1 4-4 6-8 6z" fill="#e45fb0" /><path d="M6 10h16l-3 8H4z" fill="#f5c33c" /></svg></AppSlot>
          {apps.map((a, i) => (
            <AppSlot key={i} $on={a.on}>
              {a.el}
              {a.badge}
              {a.dot && <Dot $on={a.on} />}
            </AppSlot>
          ))}
        </Apps>
        <Clock><div>20:15</div><div>30/8/2024</div></Clock>
      </Taskbar>
    </Screen>
  );
}
